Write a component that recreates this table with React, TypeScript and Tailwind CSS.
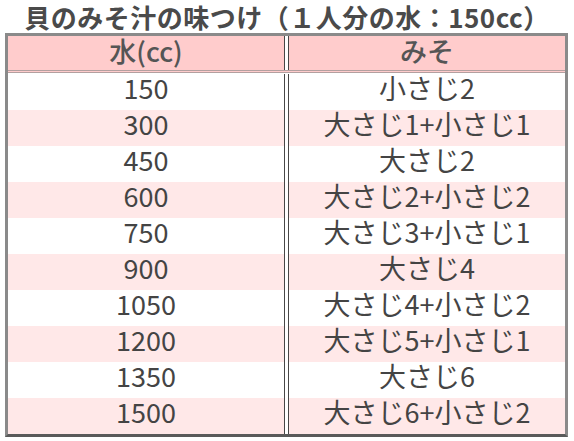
const rows: [string, string][] = [
  ['150', '小さじ2'],
  ['300', '大さじ1+小さじ1'],
  ['450', '大さじ2'],
  ['600', '大さじ2+小さじ2'],
  ['750', '大さじ3+小さじ1'],
  ['900', '大さじ4'],
  ['1050', '大さじ4+小さじ2'],
  ['1200', '大さじ5+小さじ1'],
  ['1350', '大さじ6'],
  ['1500', '大さじ6+小さじ2'],
];

function Divider() {
  return <div className="w-[5px] shrink-0 border-x border-[#474747] bg-white" />;
}

export default function App() {
  return (
    <div
      className="w-[574px] h-[441px] bg-white text-[#444]"
      style={{ fontFamily: '"Noto Sans CJK JP", sans-serif' }}
    >
      <h1 className="h-[33px] pt-[1px] text-center text-[26px] leading-[32px] font-bold tracking-[0.5px] text-[#4a4a4a] whitespace-nowrap">
        貝のみそ汁の味つけ（１人分の水：150cc）
      </h1>
      <div className="mx-[5px] w-[563px] border-[3px] border-[#8a8a8a] border-b-[#5a5a5a]">
        <div className="flex h-[37px] border-b-[3px] border-double border-b-[#b3a0a0] bg-[#ffcccc]">
          <div className="flex-1 text-center text-[27px] leading-[30px] font-medium text-[#555]">水(cc)</div>
          <Divider />
          <div className="flex-1 text-center text-[27px] leading-[30px] font-medium text-[#555]">みそ</div>
        </div>
        <div className="h-px bg-white" />
        {rows.map(([w, m], i) => (
          <div key={w} className={`flex h-[36px] ${i % 2 === 1 ? 'bg-[#ffe8e8]' : 'bg-white'}`}>
            <div className="flex-1 text-center text-[27px] leading-[28px]">{w}</div>
            <Divider />
            <div className="flex-1 text-center text-[27px] leading-[28px]">{m}</div>
          </div>
        ))}
      </div>
    </div>
  );
}
